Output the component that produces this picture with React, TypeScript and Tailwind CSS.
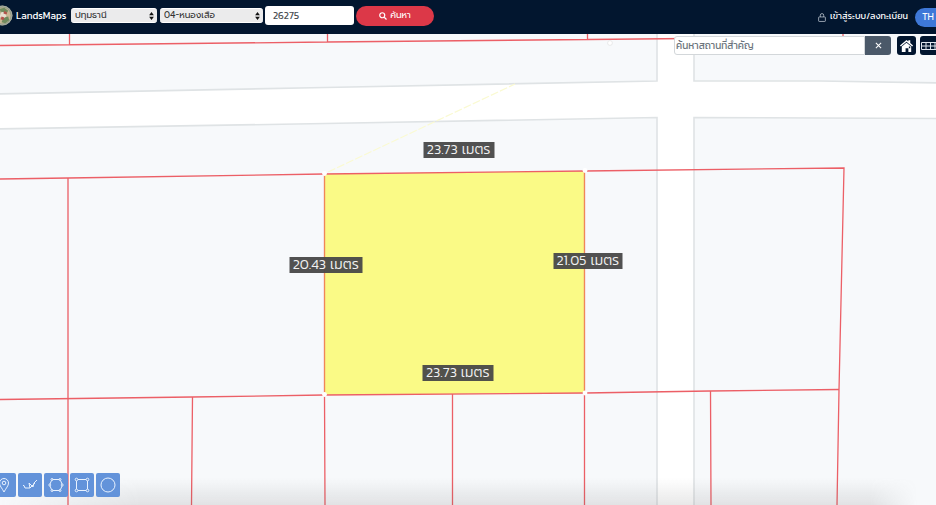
import type { ReactNode } from "react";

const prompt = "font-['Prompt','Kanit','Noto_Sans_Thai','Noto_Sans',sans-serif]";
const kanit = "font-['Kanit','Prompt','Noto_Sans_Thai','Noto_Sans',sans-serif]";

function Header() {
  return (
    <header className="flex h-[34px] shrink-0 items-center overflow-hidden bg-[#02162f] pb-[3px] text-white">
      <svg viewBox="0 0 22 22" className="-ml-2 mr-[3px] size-[21px] shrink-0" aria-hidden="true">
        <circle cx="11" cy="11" r="10.5" fill="#8f9a86" />
        <circle cx="11" cy="11" r="8.5" fill="#c9b795" />
        <path d="M8 4l5-1 4 3-2 3-5 1zM12 13l5-1 1 4-4 3-4-1z" fill="#6f8a5d" />
        <path d="M10 7l4 1 1 4-4 3-3-3z" fill="#e8ded0" />
        <path d="M13 6l3 2-1 2-3-1zM10 12l3 1-1 3-3-1z" fill="#b2524a" />
        <circle cx="11" cy="11" r="9.8" fill="none" stroke="#a8aba0" />
      </svg>
      <h1 className={`mr-1 w-[51px] whitespace-nowrap text-[10px] leading-4 ${kanit}`}>LandsMaps</h1>
      <Picker label="จังหวัด" value="ปทุมธานี" className="w-[86px]" />
      <Picker label="อำเภอ" value="04-หนองเสือ" className="ml-[3px] w-[103px]" />
      <input
        aria-label="เลขโฉนด"
        defaultValue="26275"
        className={`ml-[2px] h-[19px] w-[89px] rounded-[3px] bg-white px-2 text-[10px] text-[#4b5055] ${kanit}`}
      />
      <button className="ml-[2px] flex h-5 w-[78px] items-center justify-center gap-[3px] rounded-full bg-[#dc3848] text-[9px]">
        <svg viewBox="0 0 16 16" className="size-2" fill="none" stroke="currentColor" strokeWidth="2.4" aria-hidden="true">
          <circle cx="6.5" cy="6.5" r="5" />
          <path d="M10.5 10.5L15 15" />
        </svg>
        ค้นหา
      </button>
      <a href="#login" className={`ml-auto flex items-center gap-1 whitespace-nowrap pt-[3px] text-[9px] ${kanit}`}>
        <svg viewBox="0 0 14 16" className="h-[9px] w-2" fill="none" stroke="#bcc4cf" strokeWidth="1.4" aria-hidden="true">
          <rect x="1" y="7" width="12" height="8" rx="1" />
          <path d="M4 7V4a3 3 0 016 0v3" />
        </svg>
        เข้าสู่ระบบ/ลงทะเบียน
      </a>
      <button className="-mr-2 ml-[7px] mt-1 h-[19px] w-[29px] shrink-0 rounded-full bg-[#3e78d8] pr-[3px] text-[9px]">TH</button>
    </header>
  );
}

function Picker({ label, value, className }: { label: string; value: string; className: string }) {
  return (
    <div className={`relative h-[15px] shrink-0 ${className}`}>
      <select
        aria-label={label}
        className="block h-full w-full appearance-none rounded-[3px] border-y border-white bg-[#ebebec] px-1 text-[9px] leading-[13px] text-[#333]"
      >
        <option>{value}</option>
      </select>
      <svg viewBox="0 0 6 10" className="pointer-events-none absolute right-[3px] top-1 h-2 w-[5px]" fill="#111" aria-hidden="true">
        <path d="M3 0l3 4H0zM3 10l3-4H0z" />
      </svg>
    </div>
  );
}

function ParcelMap() {
  return (
    <svg viewBox="0 34 936 471" preserveAspectRatio="xMidYMid slice" className="absolute inset-0 h-full w-full" role="img" aria-label="แผนที่แปลงที่ดิน">
      <defs>
        <linearGradient id="shade" x1="0" y1="0" x2="0" y2="1">
          <stop offset="0" stopColor="#666" stopOpacity="0" />
          <stop offset="1" stopColor="#666" stopOpacity="0.15" />
        </linearGradient>
        <linearGradient id="fade">
          <stop offset="0" stopColor="#000" />
          <stop offset="0.15" stopColor="#fff" />
          <stop offset="0.93" stopColor="#fff" />
          <stop offset="0.98" stopColor="#000" />
        </linearGradient>
        <mask id="edges">
          <rect y="478" width="936" height="27" fill="url(#fade)" />
        </mask>
      </defs>
      <rect y="34" width="936" height="471" fill="#fff" />
      <g fill="#f7f9fb" stroke="#dfe3e5" strokeWidth="1.6">
        <path d="M-5 20H657V81L325 87.5L-5 94Z" />
        <path d="M694 20H945V83L820 81H694Z" />
        <path d="M-5 129L325 123.500L657 117.500V515H-5Z" />
        <path d="M694 117.500L945 118.500V515H694Z" />
      </g>
      <path d="M325 174L584.500 171V393L324.500 395Z" fill="#fafa86" />
      <path d="M328 172L515 84" stroke="#fafad2" strokeWidth="1.2" strokeDasharray="8 2" />
      <g fill="none" stroke="#ec5f66" strokeWidth="1.300">
        <path d="M0 45.500L327 42L588 39.500L843 37M69.500 34V45M327.500 34V42M587.500 34V39.500M843 34V37" />
        <path d="M0 179L68 178L324 174L585 171L844 168L839 390L837 505" />
        <path d="M0 399.500L192 397L324 395L585 393L710 391L839 389.500" />
        <path d="M68 178V505M192.500 397L191.500 505M324.500 174V395L325 505M452.500 394V505M584.500 171V505M710.500 391L711 505" />
      </g>
      <path d="M324.500 176V393M584.500 173V391" stroke="#f4a34d" strokeWidth="0.600" />
      <g fill="#fff">
        <circle cx="324.500" cy="173.500" r="2.400" />
        <circle cx="585" cy="170.500" r="2.400" />
        <circle cx="324.500" cy="394.500" r="2.400" />
        <circle cx="585" cy="393" r="2.400" />
        <circle cx="610" cy="43" r="2.400" stroke="#ddd" strokeWidth="0.600" />
      </g>
      <rect y="478" width="936" height="27" fill="url(#shade)" mask="url(#edges)" />
    </svg>
  );
}

function Distance({ value, place }: { value: string; place: string }) {
  return (
    <div className={`absolute flex h-4 -translate-x-1/2 -translate-y-1/2 items-center justify-center gap-1 whitespace-nowrap bg-[#484848]/95 text-[14px] leading-4 text-[#f2f2f2] ${kanit} font-light ${place}`}>
      <span>{value}</span>
      <span>เมตร</span>
    </div>
  );
}

function PlaceSearch() {
  return (
    <div className="absolute -right-[5px] top-[2px] flex items-center">
      <input
        aria-label="ค้นหาสถานที่สำคัญ"
        placeholder="ค้นหาสถานที่สำคัญ"
        className={`h-[19px] w-[191px] rounded-l-[3px] border border-[#d3d7da] bg-white px-px text-[10px] placeholder:text-[#6c757d] ${kanit}`}
      />
      <button aria-label="ล้าง" className="flex h-[19px] w-[26px] items-center justify-center rounded-r-[3px] bg-[#4b5969] text-white">
        <svg viewBox="0 0 8 8" className="size-[7px]" stroke="currentColor" strokeWidth="1.200" aria-hidden="true">
          <path d="M1 1l6 6M7 1L1 7" />
        </svg>
      </button>
      <button aria-label="หน้าแรก" className="ml-[6px] flex size-[19px] items-center justify-center rounded-[3px] bg-[#02162f]">
        <svg viewBox="0 0 16 16" className="size-[15px]" fill="#fff" aria-hidden="true">
          <path d="M8 2L1 8l1 1 6-5 6 5 1-1-3-2.600V2.500h-2v1.200z" />
          <path fillRule="evenodd" d="M3 9l5-4 5 4v6h-3v-4H7v4H3zM10.500 9h1.500v2h-1.500z" />
        </svg>
      </button>
      <button aria-label="ตาราง" className="ml-1 flex h-[19px] w-[21px] items-center overflow-hidden rounded-[3px] bg-[#02162f] pl-px">
        <svg viewBox="0 0 20 10" className="h-[10px] w-5 shrink-0" fill="none" stroke="#dfe6ee" strokeWidth="1" aria-hidden="true">
          <path d="M.5 1.500h20v7H.5zM0 5h20M5 1v8M9.500 1v8M14 1v8" />
        </svg>
      </button>
    </div>
  );
}

function Tool({ label, children }: { label: string; children: ReactNode }) {
  return (
    <button aria-label={label} className="flex size-6 items-center justify-center rounded-[2px] bg-[#5b8dd8]/95">
      <svg viewBox="0 0 16 16" className="size-4" fill="none" stroke="#e8f2ff" strokeWidth="1" aria-hidden="true">
        {children}
      </svg>
    </button>
  );
}

export default function App() {
  return (
    <div className={`flex min-h-screen flex-col overflow-hidden ${prompt}`}>
      <Header />
      <main className="relative flex-1 overflow-hidden">
        <ParcelMap />
        <Distance value="23.73" place="left-[49%] top-[24.7%] w-[71px]" />
        <Distance value="20.43" place="left-[34.8%] top-[49%] w-[73px]" />
        <Distance value="21.05" place="left-[62.8%] top-[48.1%] w-[69px]" />
        <Distance value="23.73" place="left-[48.9%] top-[72%] w-[71px]" />
        <PlaceSearch />
        <div className="absolute -left-2 bottom-2 flex gap-[2px]">
          <Tool label="จุด">
            <path d="M8 15C6 11 3.500 9 3.500 6a4.500 4.500 0 019 0C12.500 9 10 11 8 15z" />
            <circle cx="8" cy="6" r="1.800" />
          </Tool>
          <Tool label="เส้น">
            <path d="M1 8.500h1l1 2.500h5l-1-5 4 4 1-4 3-3M8 11l5-5" />
          </Tool>
          <Tool label="รูปหลายเหลี่ยม">
            <path d="M4.500 2.500h7M12.500 3.500L14 7M14 9l-1.500 3.500M11.500 13.500h-7M3.500 12.500L2 9M2 7l1.500-3.500" />
            <circle cx="4" cy="2.500" r="1" />
            <circle cx="12" cy="2.500" r="1" />
            <circle cx="14.200" cy="8" r="1" />
            <circle cx="12" cy="13.500" r="1" />
            <circle cx="4" cy="13.500" r="1" />
            <circle cx="1.800" cy="8" r="1" />
          </Tool>
          <Tool label="สี่เหลี่ยม">
            <path d="M4 2.500h8M13.500 4v8M12 13.500H4M2.500 12V4" />
            <circle cx="2.500" cy="2.500" r="1.300" />
            <circle cx="13.500" cy="2.500" r="1.300" />
            <circle cx="13.500" cy="13.500" r="1.300" />
            <circle cx="2.500" cy="13.500" r="1.300" />
          </Tool>
          <Tool label="วงกลม">
            <circle cx="8" cy="8" r="7" />
          </Tool>
        </div>
      </main>
    </div>
  );
}
